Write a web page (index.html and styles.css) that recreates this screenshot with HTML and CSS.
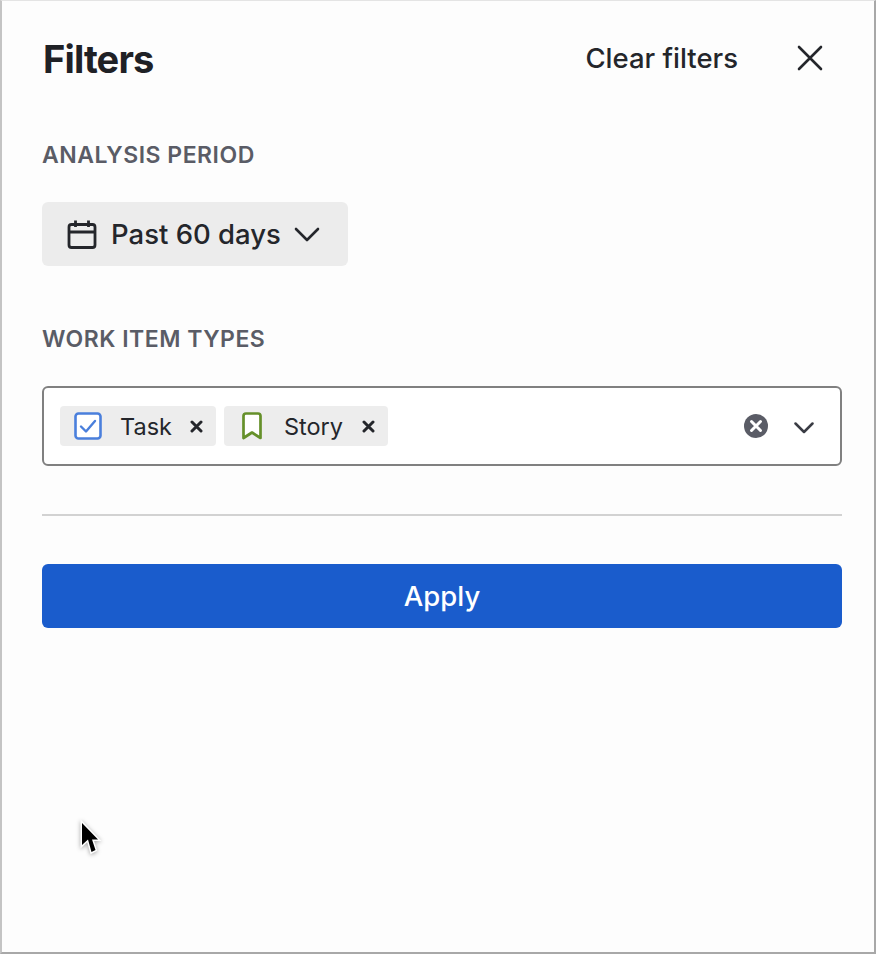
FILE: index.html
```html
<!DOCTYPE html>
<html>
<head>
    <title>Filters</title>
    <link rel="stylesheet" href="styles.css">
</head>
<body>
    <div class="panel">
        <div class="panel-header">
            <h1>Filters</h1>
            <button class="clear-btn">Clear filters</button>
            <button class="close-btn" aria-label="Close">
                <svg width="26" height="26" viewBox="0 0 26 26"><path d="M2 2 L24 24 M24 2 L2 24" fill="none" stroke="#24262b" stroke-width="2.600" stroke-linecap="round"/></svg>
            </button>
        </div>

        <h2 class="period-label">ANALYSIS PERIOD</h2>
        <button class="period-btn">
            <svg width="30" height="32" viewBox="0 0 30 32"><path d="M2 9 a2.500 2.500 0 0 1 2.500-2.500 H25.500 a2.500 2.500 0 0 1 2.500 2.500 V27 a2.500 2.500 0 0 1-2.500 2.500 H4.500 a2.500 2.500 0 0 1-2.500-2.500 Z M2 14 H28 M8.500 2.500 V9 M21.500 2.500 V9" fill="none" stroke="#24262b" stroke-width="2.800"/></svg>
            <span>Past 60 days</span>
            <svg class="period-chevron" width="26" height="16" viewBox="0 0 26 16"><path d="M2 3 L13 14 L24 3" fill="none" stroke="#24262b" stroke-width="2.600" stroke-linecap="round" stroke-linejoin="round"/></svg>
        </button>

        <h2 class="types-label">WORK ITEM TYPES</h2>
        <div class="select-box">
            <div class="tag tag-task">
                <svg width="28" height="28" viewBox="0 0 28 28"><rect x="1.500" y="1.500" width="25" height="25" rx="3" fill="#fff" stroke="#4a7fdc" stroke-width="2.600"/><path d="M7 14.500 L12 19.500 L21 9" fill="none" stroke="#4a7fdc" stroke-width="2.400" stroke-linecap="round" stroke-linejoin="round"/></svg>
                <span class="tag-text">Task</span>
                <svg width="13" height="13" viewBox="0 0 13 13"><path d="M2 2 L11 11 M11 2 L2 11" stroke="#24262b" stroke-width="3" stroke-linecap="round"/></svg>
            </div>
            <div class="tag tag-story">
                <svg width="20" height="28" viewBox="0 0 20 28"><path d="M1.500 4 a2.500 2.500 0 0 1 2.500-2.500 H16 a2.500 2.500 0 0 1 2.500 2.500 V26 L10 20.500 L1.500 26 Z" fill="#fff" stroke="#65902a" stroke-width="2.700" stroke-linejoin="round"/></svg>
                <span class="tag-text">Story</span>
                <svg width="13" height="13" viewBox="0 0 13 13"><path d="M2 2 L11 11 M11 2 L2 11" stroke="#24262b" stroke-width="3" stroke-linecap="round"/></svg>
            </div>
            <div class="select-actions">
                <svg width="24" height="24" viewBox="0 0 24 24"><circle cx="12" cy="12" r="12" fill="#5a5c66"/><path d="M7.500 7.500 L16.500 16.500 M16.500 7.500 L7.500 16.500" stroke="#fff" stroke-width="3" stroke-linecap="round"/></svg>
                <svg class="select-chevron" width="20" height="12" viewBox="0 0 20 12"><path d="M1.500 1.500 L10 10 L18.500 1.500" fill="none" stroke="#3a3c44" stroke-width="2.500" stroke-linecap="round" stroke-linejoin="round"/></svg>
            </div>
        </div>

        <hr class="divider">
        <button class="apply-btn">Apply</button>

        <svg class="cursor" width="24" height="38" viewBox="0 0 24 38"><path d="M4 4 L4 26 L10 20.500 L13.500 33 L17.500 31 L14 20.500 L20 20.500 Z" fill="#000" stroke="#fff" stroke-width="3" paint-order="stroke"/></svg>
    </div>
</body>
</html>
```

FILE: styles.css
```css
* {
    box-sizing: border-box;
}

body {
    margin: 0;
    background-color: #fdfdfd;
    font-family: "Inter", "Liberation Sans", sans-serif;
    color: #24262b;
}

button {
    font-family: inherit;
    border: none;
    background: none;
    padding: 0;
}

.panel {
    position: relative;
    width: 876px;
    height: 954px;
    padding: 0 32px 0 40px;
    background-color: #fdfdfd;
    border-left: 2px solid #c4c4c4;
    border-right: 2px solid #a8a8a8;
    border-bottom: 2px solid #a8a8a8;
    border-top: 1px solid #e4e4e4;
}

.panel-header {
    display: flex;
    align-items: center;
    height: 117px;
    padding: 0 19px 2px 0;
}

h1 {
    margin: 0 0 0 1px;
    flex: 1;
    font-size: 38px;
    font-weight: 700;
    letter-spacing: -0.85px;
    color: #1f2126;
}

.clear-btn {
    margin-bottom: 2px;
    font-size: 27.500px;
    font-weight: 500;
    color: #24262b;
}

.close-btn {
    display: flex;
    margin: 0 0 2px 59px;
}

h2 {
    margin: 0;
    font-size: 23px;
    line-height: 28px;
    font-weight: 600;
    letter-spacing: 0.5px;
    color: #5a5c66;
}

.period-label {
    margin-top: 23px;
}

.period-btn {
    display: flex;
    align-items: center;
    width: 306px;
    height: 64px;
    margin-top: 33px;
    padding-left: 25px;
    background-color: #ececec;
    border-radius: 6px;
    font-size: 27.500px;
    font-weight: 500;
    color: #24262b;
}

.period-btn span {
    margin-left: 14px;
}

.period-chevron {
    margin-left: 13px;
}

.types-label {
    margin-top: 59px;
}

.select-box {
    display: flex;
    align-items: center;
    gap: 8px;
    width: 800px;
    height: 80px;
    margin-top: 33px;
    padding: 0 26px 0 16px;
    background-color: #fff;
    border: 2px solid #808080;
    border-radius: 6px;
}

.tag {
    display: flex;
    align-items: center;
    height: 40px;
    background-color: #ededed;
    border-radius: 4px;
    font-size: 23.500px;
    color: #24262b;
}

.tag-task {
    padding: 0 13px 0 14px;
}

.tag-task .tag-text {
    margin: 0 18px;
}

.tag-story {
    padding: 0 13px 0 18px;
}

.tag-story .tag-text {
    margin: 0 19px 0 22px;
}

.select-actions {
    display: flex;
    align-items: center;
    gap: 26px;
    margin-left: auto;
}

.select-chevron {
    margin-top: 4px;
}

.divider {
    width: 800px;
    height: 2px;
    margin: 48px 0 0;
    border: none;
    background-color: #d2d2d2;
}

.apply-btn {
    display: block;
    width: 800px;
    height: 64px;
    margin-top: 48px;
    background-color: #1a5ccc;
    border-radius: 6px;
    font-size: 27.500px;
    font-weight: 500;
    color: #fff;
}

.cursor {
    position: absolute;
    left: 76px;
    top: 818px;
    filter: drop-shadow(0 1px 2px rgba(0, 0, 0, 0.35));
}
```
